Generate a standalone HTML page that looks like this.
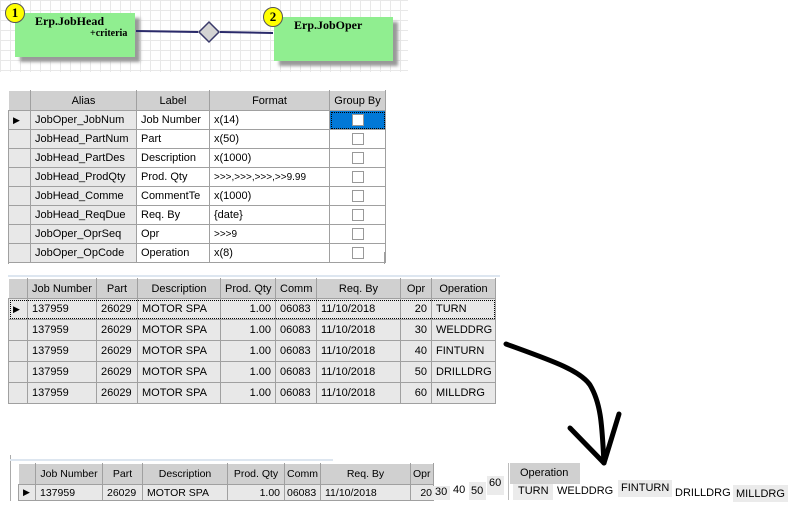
<!DOCTYPE html>
<html><head><style>
*{margin:0;padding:0;box-sizing:border-box}
body{width:800px;height:512px;background:#fff;position:relative;overflow:hidden;font-family:"Liberation Sans",Arial,sans-serif;font-size:11px;color:#000}
.a{position:absolute}
.grid{left:0;top:0;width:408px;height:72px;background-image:linear-gradient(#e8e8e8 1px,transparent 1px),linear-gradient(90deg,#e8e8e8 1px,transparent 1px);background-size:10px 10px}
.box{background:#90ee90;box-shadow:5px 5px 3px #999;font-family:"Liberation Serif",serif;font-weight:bold}
.num{width:20px;height:20px;border-radius:50%;background:#ffff00;border:1px solid #555;font-family:"Liberation Serif",serif;font-weight:bold;font-size:13px;text-align:center;line-height:18px}
table{border-collapse:collapse;position:absolute;table-layout:fixed}
td{border:1px solid #a0a0a0;padding:0 4px;white-space:nowrap;overflow:hidden}
.h td{background:#d0d0d0;text-align:center;border-color:#fff #a0a0a0 #a0a0a0 #fff}
.ind{background:#e8e8e8}
.r{text-align:right}
.cb{display:inline-block;width:12px;height:12px;border:1px solid #999;background:#fff;vertical-align:middle}
</style></head><body>
<div class="a grid"></div>
<div class="a box" style="left:15px;top:13px;width:120px;height:44px"><div class="a" style="left:20px;top:1px;font-size:12px">Erp.JobHead</div><div class="a" style="left:75px;top:15px;font-size:10px">+criteria</div></div>
<div class="a box" style="left:274px;top:17px;width:119px;height:44px"><div class="a" style="left:20px;top:1px;font-size:12px">Erp.JobOper</div></div>
<div class="a num" style="left:5px;top:3px">1</div>
<div class="a num" style="left:263px;top:7px">2</div>
<svg class="a" style="left:0;top:0" width="410" height="72"><path d="M136 31 L198 32 M220 32 L273 33" stroke="#2a2a6a" stroke-width="2"/><path d="M209 22 L219 32 L209 42 L199 32Z" fill="#d4d4d4" stroke="#3a3a6a" stroke-width="1.5"/></svg>

<table style="left:8px;top:90px;width:377px">
<col style="width:22px"><col style="width:106px"><col style="width:73px"><col style="width:120px"><col style="width:56px">
<tr class="h" style="height:20px"><td></td><td>Alias</td><td>Label</td><td>Format</td><td>Group By</td></tr>
<tr style="height:19px"><td class="ind" style="font-size:9px">▶</td><td class="ind">JobOper_JobNum</td><td>Job Number</td><td>x(14)</td><td style="background:#0078d7;text-align:center;outline:1px dotted #000;outline-offset:-2px"><span class="cb"></span></td></tr>
<tr style="height:19px"><td class="ind"></td><td class="ind">JobHead_PartNum</td><td>Part</td><td>x(50)</td><td style="text-align:center"><span class="cb"></span></td></tr>
<tr style="height:19px"><td class="ind"></td><td class="ind">JobHead_PartDes</td><td>Description</td><td>x(1000)</td><td style="text-align:center"><span class="cb"></span></td></tr>
<tr style="height:19px"><td class="ind"></td><td class="ind">JobHead_ProdQty</td><td>Prod. Qty</td><td style="font-size:10px">&gt;&gt;&gt;,&gt;&gt;&gt;,&gt;&gt;&gt;,&gt;&gt;9.99</td><td style="text-align:center"><span class="cb"></span></td></tr>
<tr style="height:19px"><td class="ind"></td><td class="ind">JobHead_Comme</td><td>CommentTe</td><td>x(1000)</td><td style="text-align:center"><span class="cb"></span></td></tr>
<tr style="height:19px"><td class="ind"></td><td class="ind">JobHead_ReqDue</td><td>Req. By</td><td>{date}</td><td style="text-align:center"><span class="cb"></span></td></tr>
<tr style="height:19px"><td class="ind"></td><td class="ind">JobOper_OprSeq</td><td>Opr</td><td style="font-size:10px">&gt;&gt;&gt;9</td><td style="text-align:center"><span class="cb"></span></td></tr>
<tr style="height:19px"><td class="ind"></td><td class="ind">JobOper_OpCode</td><td>Operation</td><td>x(8)</td><td style="text-align:center"><span class="cb"></span></td></tr>
</table>
<div class="a" style="left:8px;top:252px;width:377px;height:12px;border-left:1px solid #a0a0a0;border-right:1px solid #a0a0a0"></div>

<div class="a" style="left:8px;top:275px;width:492px;height:2px;background:#dde6f0"></div>
<table style="left:8px;top:278px;width:487px">
<col style="width:19px"><col style="width:69px"><col style="width:41px"><col style="width:83px"><col style="width:55px"><col style="width:41px"><col style="width:84px"><col style="width:31px"><col style="width:64px">
<tr class="h" style="height:20px"><td></td><td>Job Number</td><td>Part</td><td>Description</td><td>Prod. Qty</td><td>Comm</td><td>Req. By</td><td>Opr</td><td>Operation</td></tr>
<tr style="height:21px;background:#e8e8e8;outline:1px dotted #000;outline-offset:-2px"><td style="font-size:9px">▶</td><td>137959</td><td>26029</td><td>MOTOR SPA</td><td class="r">1.00</td><td>06083</td><td>11/10/2018</td><td class="r">20</td><td>TURN</td></tr>
<tr style="height:21px;background:#e8e8e8"><td></td><td>137959</td><td>26029</td><td>MOTOR SPA</td><td class="r">1.00</td><td>06083</td><td>11/10/2018</td><td class="r">30</td><td>WELDDRG</td></tr>
<tr style="height:21px;background:#e8e8e8"><td></td><td>137959</td><td>26029</td><td>MOTOR SPA</td><td class="r">1.00</td><td>06083</td><td>11/10/2018</td><td class="r">40</td><td>FINTURN</td></tr>
<tr style="height:21px;background:#e8e8e8"><td></td><td>137959</td><td>26029</td><td>MOTOR SPA</td><td class="r">1.00</td><td>06083</td><td>11/10/2018</td><td class="r">50</td><td>DRILLDRG</td></tr>
<tr style="height:21px;background:#e8e8e8"><td></td><td>137959</td><td>26029</td><td>MOTOR SPA</td><td class="r">1.00</td><td>06083</td><td>11/10/2018</td><td class="r">60</td><td>MILLDRG</td></tr>
</table>

<svg class="a" style="left:490px;top:330px" width="150" height="140"><path d="M16 14 C60 30 90 40 100 55 C112 75 112 100 114 133" fill="none" stroke="#000" stroke-width="5" stroke-linecap="round"/><path d="M80 98 L114 133 L129 84" fill="none" stroke="#000" stroke-width="5" stroke-linecap="round" stroke-linejoin="round"/></svg>

<div class="a" style="left:10px;top:455px;width:1px;height:46px;background:#aaa"></div>
<div class="a" style="left:10px;top:459px;width:323px;height:2px;background:#dde6f0"></div>
<table style="left:18px;top:463px;width:415px;font-size:10.5px">
<col style="width:17px"><col style="width:67px"><col style="width:40px"><col style="width:85px"><col style="width:57px"><col style="width:36px"><col style="width:90px"><col style="width:23px">
<tr class="h" style="height:21px"><td></td><td>Job Number</td><td>Part</td><td>Description</td><td>Prod. Qty</td><td style="padding:0 1px">Comm</td><td>Req. By</td><td style="text-align:left;padding:0 2px">Opr</td></tr>
<tr style="height:16px;background:#e8e8e8"><td style="font-size:9px">▶</td><td>137959</td><td>26029</td><td>MOTOR SPA</td><td class="r">1.00</td><td style="padding:0 2px">06083</td><td>11/10/2018</td><td class="r" style="padding:0 1px">20</td></tr>
</table>
<div class="a" style="left:433px;top:486px;width:17px;height:14px;background:#ebebeb;padding-left:2px">30</div>
<div class="a" style="left:453px;top:484px">40</div>
<div class="a" style="left:469px;top:482px;width:17px;height:18px;background:#ebebeb;padding:3px 0 0 2px">50</div>
<div class="a" style="left:487px;top:476px;width:17px;height:19px;background:#ebebeb;padding:1px 0 0 2px">60</div>
<div class="a" style="left:508px;top:463px;width:1px;height:37px;background:#bbb"></div>
<div class="a" style="left:510px;top:463px;width:70px;height:21px;background:#d0d0d0;padding:4px 0 0 10px">Operation</div>
<div class="a" style="left:513px;top:484px;width:40px;height:16px;background:#ebebeb;padding:1px 0 0 5px">TURN</div>
<div class="a" style="left:557px;top:485px">WELDDRG</div>
<div class="a" style="left:618px;top:480px;width:54px;height:17px;background:#ebebeb;padding:2px 0 0 3px">FINTURN</div>
<div class="a" style="left:673px;top:484px;width:60px;height:16px;padding:3px 0 0 2px">DRILLDRG</div>
<div class="a" style="left:733px;top:485px;width:55px;height:17px;background:#ebebeb;padding:3px 0 0 3px">MILLDRG</div>
</body></html>
